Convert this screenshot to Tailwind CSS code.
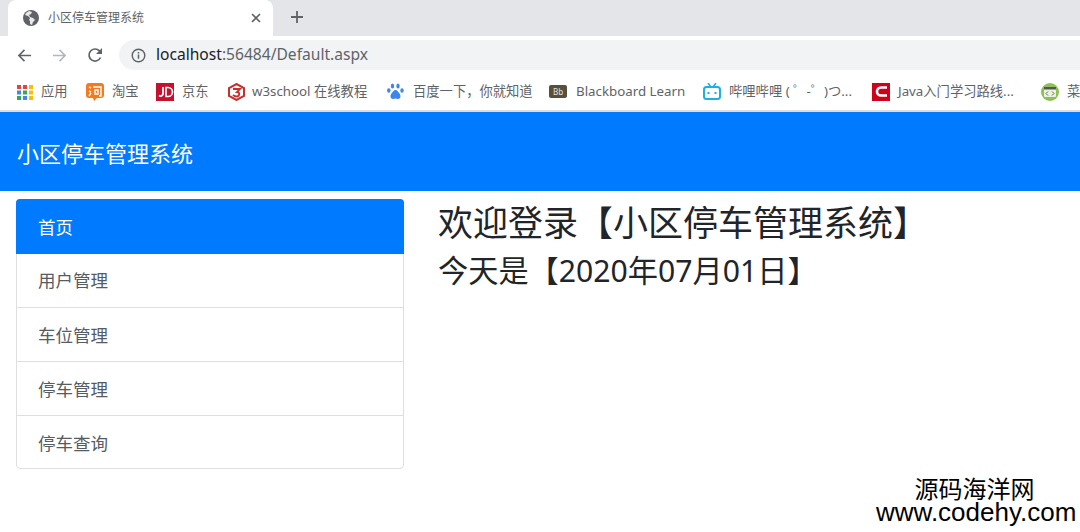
<!DOCTYPE html>
<html lang="zh-CN">
<head>
    <meta charset="UTF-8">
    <title>小区停车管理系统</title>
    <script src="https://cdn.jsdelivr.net/npm/@tailwindcss/browser@4"></script>
</head>
<body class="relative w-[1080px] h-[532px] overflow-hidden bg-white font-['Noto_Sans','Noto_Sans_CJK_SC',sans-serif]">
    <!-- Tab strip -->
    <div class="flex items-end h-9 bg-[#e3e5e8] pl-2">
        <div class="flex items-center w-[265px] h-[36px] bg-white rounded-t-lg pl-[15px] pr-[12px] text-[12px] text-[#5f6368]">
            <svg class="w-[16px] h-[16px] shrink-0" viewBox="0 0 16 16"><circle cx="8" cy="8" r="8" fill="#5f6368"/><path d="M2 5l3 1 2 2-1 2 1 1v3l2 1 1-3 2-2-2-2-3-1-1-2 2-1 1-2-3-1-3 2z" fill="#fff" opacity=".85"/></svg>
            <span class="ml-[9px]">小区停车管理系统</span>
            <svg class="w-[10px] h-[10px] ml-auto" viewBox="0 0 10 10"><path d="M1 1l8 8M9 1l-8 8" stroke="#5f6368" stroke-width="1.6"/></svg>
        </div>
        <svg class="w-[14px] h-[14px] ml-[17px] mb-[12px]" viewBox="0 0 14 14"><path d="M7 1v12M1 7h12" stroke="#5f6368" stroke-width="1.8"/></svg>
    </div>

    <!-- Toolbar -->
    <div class="flex items-center h-9 bg-white pl-[17px] pt-[2px]">
        <svg class="w-[15px] h-[15px]" viewBox="0 0 16 16"><path d="M15 8H2M8 2L2 8l6 6" fill="none" stroke="#5f6368" stroke-width="1.7"/></svg>
        <svg class="w-[15px] h-[15px] ml-[20px]" viewBox="0 0 16 16"><path d="M1 8h13M8 2l6 6-6 6" fill="none" stroke="#b4b7bb" stroke-width="1.7"/></svg>
        <svg class="w-[16px] h-[16px] ml-[20px]" viewBox="0 0 16 16"><path d="M13.5 10.5A6 6 0 1 1 12.4 3.9L14.5 6" fill="none" stroke="#5f6368" stroke-width="1.7"/><path d="M15 1v6H9z" fill="#5f6368"/></svg>
        <div class="flex items-center grow h-[30px] ml-[16px] pl-[12px] bg-[#f1f3f4] rounded-l-[15px] text-[15.600px]">
            <svg class="w-[15px] h-[15px]" viewBox="0 0 16 16"><circle cx="8" cy="8" r="6.7" fill="none" stroke="#5f6368" stroke-width="1.5"/><path d="M8 7v4.5M8 4.3v1.5" stroke="#5f6368" stroke-width="1.6"/></svg>
            <span class="ml-[10px] text-[#202124]">localhost<span class="text-[#5f6368]">:56484/Default.aspx</span></span>
        </div>
    </div>

    <!-- Bookmarks -->
    <div class="flex items-center h-[40px] pl-[17px] pt-[1px] text-[13.300px] text-[#5f6368] whitespace-nowrap overflow-hidden border-b-2 border-[#dcdcdc]">
        <div class="flex items-center w-[69px] shrink-0">
            <svg class="w-[16px] h-[16px] shrink-0" viewBox="0 0 16 16">
                <rect x="0" y="1" width="4" height="4" fill="#ea4335"/><rect x="6" y="1" width="4" height="4" fill="#ea4335"/><rect x="12" y="1" width="4" height="4" fill="#fbbc05"/>
                <rect x="0" y="6.500" width="4" height="4" fill="#4285f4"/><rect x="6" y="6.500" width="4" height="4" fill="#34a853"/><rect x="12" y="6.500" width="4" height="4" fill="#fbbc05"/>
                <rect x="0" y="12" width="4" height="4" fill="#34a853"/><rect x="6" y="12" width="4" height="4" fill="#4285f4"/><rect x="12" y="12" width="4" height="4" fill="#fbbc05"/>
            </svg>
            <span class="ml-[8px]">应用</span>
        </div>
        <div class="flex items-center w-[70px] shrink-0">
            <svg class="w-[18px] h-[18px] shrink-0" viewBox="0 0 18 18"><path d="M3 0h12a3 3 0 0 1 3 3v9a3 3 0 0 1-3 3h-4l-3 3-1-3H3a3 3 0 0 1-3-3V3a3 3 0 0 1 3-3z" fill="#f47a20"/><path d="M3 4l2 1M3 8l2 1M3 13l2-3M7 4h8v9h-2M9 7h3v4H9z" fill="none" stroke="#fff" stroke-width="1.400"/></svg>
            <span class="ml-[8px]">淘宝</span>
        </div>
        <div class="flex items-center w-[72px] shrink-0">
            <svg class="w-[18px] h-[18px] shrink-0" viewBox="0 0 18 18"><rect width="18" height="18" fill="#c4122e"/><path d="M7 4v7a2.500 2.500 0 0 1-4 1.500" fill="none" stroke="#fff" stroke-width="1.800"/><path d="M10 4.500h2a4.500 4.500 0 0 1 0 9h-2z" fill="none" stroke="#fff" stroke-width="1.700"/></svg>
            <span class="ml-[8px]">京东</span>
        </div>
        <div class="flex items-center w-[159px] shrink-0">
            <svg class="w-[17px] h-[18px] shrink-0" viewBox="0 0 17 18"><path d="M8.500 1L16 5v8l-7.500 4L1 13V5z" fill="none" stroke="#c9302c" stroke-width="2"/><path d="M5 6h7l-3 3c3 0 3 4 0 4.500-1.500 0-3-.5-4-1.500" fill="none" stroke="#c9302c" stroke-width="1.800"/></svg>
            <span class="ml-[7px]">w3school 在线教程</span>
        </div>
        <div class="flex items-center w-[162px] shrink-0">
            <svg class="w-[17px] h-[17px] shrink-0" viewBox="0 0 17 17" fill="#3f86ea"><ellipse cx="5.500" cy="3" rx="1.700" ry="2.500"/><ellipse cx="11" cy="3" rx="1.700" ry="2.500"/><ellipse cx="1.800" cy="7.500" rx="1.700" ry="2.300"/><ellipse cx="15" cy="7.500" rx="1.700" ry="2.300"/><path d="M8.500 7c-2 0-2.500 2-4 3.500S3 16 6 16c1 0 1.500-.4 2.500-.4s1.500.4 2.500.4c3 0 3-4 1.500-5.500S10.500 7 8.500 7z"/></svg>
            <span class="ml-[9px]">百度一下，你就知道</span>
        </div>
        <div class="flex items-center w-[154px] shrink-0">
            <span class="flex items-center justify-center w-[18px] h-[13px] shrink-0 bg-[#57503f] rounded-[2px] text-[8px] leading-none text-[#e8e4d8]">Bb</span>
            <span class="ml-[9px]">Blackboard Learn</span>
        </div>
        <div class="flex items-center w-[169px] shrink-0">
            <svg class="w-[18px] h-[17px] shrink-0" viewBox="0 0 18 17"><rect x="1" y="4" width="16" height="12" rx="2.500" fill="none" stroke="#1fb0e0" stroke-width="2"/><path d="M5 0l3 4M13 0l-3 4" stroke="#1fb0e0" stroke-width="1.600"/><path d="M5.500 9v2M12.500 9v2" stroke="#1fb0e0" stroke-width="2"/></svg>
            <span class="ml-[8px]">哔哩哔哩 ( ゜-゜)つ...</span>
        </div>
        <div class="flex items-center w-[169px] shrink-0">
            <span class="flex items-center justify-center w-[18px] h-[18px] shrink-0 bg-[#d0021b]">
                <svg class="w-[13px] h-[13px]" viewBox="0 0 13 13"><path d="M12 2.500H6a4 4 0 0 0 0 8h6" fill="none" stroke="#fff" stroke-width="2.600"/></svg>
            </span>
            <span class="ml-[8px]">Java入门学习路线...</span>
        </div>
        <div class="flex items-center shrink-0">
            <svg class="w-[18px] h-[18px] shrink-0" viewBox="0 0 18 18"><circle cx="9" cy="9" r="9" fill="#8dc153"/><rect x="3" y="4" width="12" height="10" rx="1" fill="#e9f2dc"/><rect x="3" y="4" width="12" height="2.500" fill="#555"/><path d="M7 8.500l-2 2 2 2M11 8.500l2 2-2 2" fill="none" stroke="#666" stroke-width="1"/></svg>
            <span class="ml-[8px]">菜鸟教程</span>
        </div>
    </div>

    <!-- Navbar -->
    <div class="flex items-center h-[79px] bg-[#007bff] pl-[17px] pt-[4px] text-[22px] text-white">小区停车管理系统</div>

    <!-- Content -->
    <div class="flex pt-2 pl-4">
        <div class="w-[388px] h-[270px] rounded-[4px] border border-[#dfdfdf] text-[17.500px] text-[#555c63]">
            <div class="flex items-center h-[55px] -mx-px -mt-px px-[22px] pt-[1px] rounded-t-[4px] bg-[#007bff] text-white">首页</div>
            <div class="flex items-center h-[54px] px-[21px] border-b border-[#dfdfdf]">用户管理</div>
            <div class="flex items-center h-[54px] px-[21px] pt-[2px] border-b border-[#dfdfdf]">车位管理</div>
            <div class="flex items-center h-[54px] px-[21px] pt-[2px] border-b border-[#dfdfdf]">停车管理</div>
            <div class="flex items-center h-[53px] px-[21px] pt-[2px]">停车查询</div>
        </div>
        <div class="ml-[34px] text-[#212529]">
            <div class="text-[35px] leading-[50px] -mt-[1px]">欢迎登录【小区停车管理系统】</div>
            <div class="text-[30.200px] leading-[44px] mt-[1px]">今天是【2020年07月01日】</div>
        </div>
    </div>

    <!-- Watermark -->
    <div class="absolute right-[4px] bottom-[9px] w-[200px] text-center text-black text-[26px] leading-[22px] whitespace-nowrap font-['Liberation_Sans','Noto_Sans_CJK_SC',sans-serif]">
        <div class="text-[24px] pr-[3px]">源码海洋网</div>
        <div>www.codehy.com</div>
    </div>
</body>
</html>
